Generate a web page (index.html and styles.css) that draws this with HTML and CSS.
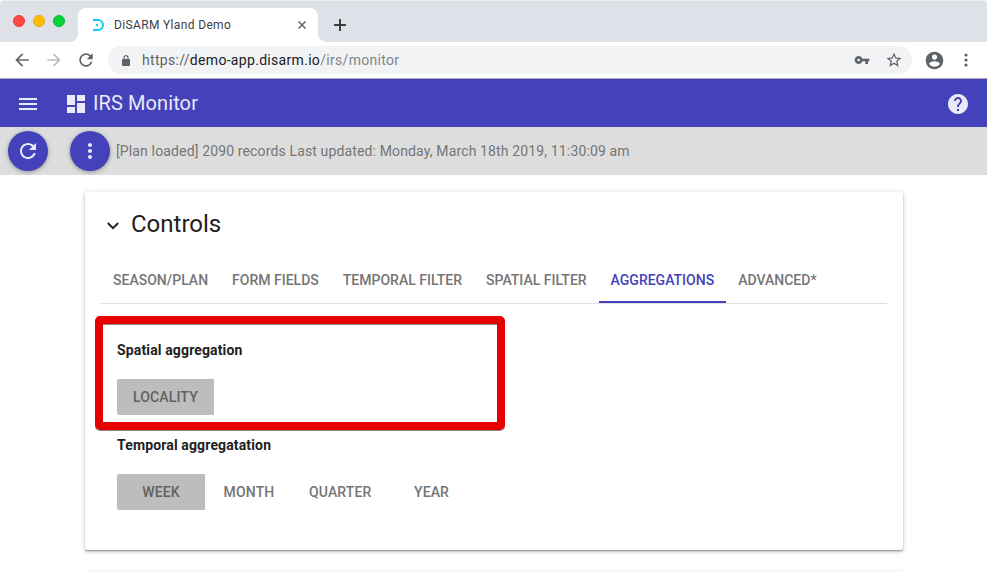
FILE: index.html
```html
<!DOCTYPE html>
<html lang="en">
<head>
<meta charset="utf-8">
<title>DiSARM Yland Demo</title>
<link rel="stylesheet" href="styles.css">
</head>
<body>
<div class="tabstrip">
  <div class="lights"><i class="red"></i><i class="yellow"></i><i class="green"></i></div>
  <div class="browser-tab">
    <svg class="favicon" width="12" height="12" viewBox="0 0 12 12"><path d="M1 1h5a5 5 0 0 1 0 10H1" fill="none" stroke="#0cd0fc" stroke-width="2"/><circle cx="5" cy="6" r="1.200" fill="#0ccbfa"/></svg>
    <span class="tab-title">DiSARM Yland Demo</span>
    <svg class="close" width="8" height="8" viewBox="0 0 8 8"><path d="M.5.5l7 7M7.500.5l-7 7" stroke="#5f6368" stroke-width="1.500"/></svg>
  </div>
  <svg class="plus" width="12" height="12" viewBox="0 0 12 12"><path d="M6 0v12M0 6h12" stroke="#3c4043" stroke-width="2"/></svg>
</div>
<div class="toolbar">
  <svg class="nav-icon" viewBox="0 0 24 24" fill="#5f6368"><path d="M20 11H7.830l5.590-5.590L12 4l-8 8 8 8 1.410-1.410L7.830 13H20v-2z"/></svg>
  <svg class="nav-icon" viewBox="0 0 24 24" fill="#babcbe"><path d="M12 4l-1.410 1.410L16.170 11H4v2h12.170l-5.580 5.590L12 20l8-8z"/></svg>
  <svg class="nav-icon" viewBox="0 0 24 24" fill="#5f6368"><path d="M17.650 6.350C16.200 4.900 14.210 4 12 4c-4.420 0-7.990 3.580-7.990 8s3.570 8 7.990 8c3.730 0 6.840-2.550 7.730-6h-2.080c-.82 2.330-3.040 4-5.650 4-3.310 0-6-2.690-6-6s2.690-6 6-6c1.660 0 3.140.69 4.220 1.780L13 11h7V4l-2.350 2.350z"/></svg>
  <div class="omnibox">
    <svg class="lock" width="8" height="11" viewBox="0 0 8 11"><rect y="4" width="8" height="7" rx="1" fill="#5f6368"/><path d="M2 4.500V2.700a2 2 0 0 1 4 0v1.800" fill="none" stroke="#5f6368" stroke-width="1.200"/></svg>
    <span class="url">https://<b>demo-app.disarm.io</b><em>/irs/monitor</em></span>
    <svg class="key" width="16" height="16" viewBox="0 0 24 24" fill="#5f6368"><path d="M12.650 10C11.830 7.670 9.610 6 7 6c-3.310 0-6 2.690-6 6s2.690 6 6 6c2.610 0 4.830-1.670 5.650-4H17v4h4v-4h2v-4H12.650zM7 14c-1.100 0-2-.9-2-2s.9-2 2-2 2 .9 2 2-.9 2-2 2z"/></svg>
    <svg class="star" width="18" height="18" viewBox="0 0 24 24" fill="#5f6368"><path d="M22 9.240l-7.190-.62L12 2 9.190 8.630 2 9.240l5.460 4.730L5.820 21 12 17.270 18.180 21l-1.630-7.030L22 9.240zM12 15.400l-3.760 2.270 1-4.280-3.320-2.880 4.380-.38L12 6.100l1.710 4.040 4.380.38-3.320 2.880 1 4.280L12 15.400z"/></svg>
  </div>
  <svg class="profile" width="21" height="21" viewBox="0 0 24 24" fill="#5f6368"><path d="M12 2C6.480 2 2 6.480 2 12s4.480 10 10 10 10-4.480 10-10S17.520 2 12 2zm0 3c1.660 0 3 1.340 3 3s-1.340 3-3 3-3-1.340-3-3 1.340-3 3-3zm0 14.200c-2.500 0-4.710-1.280-6-3.220.03-1.990 4-3.080 6-3.080 1.990 0 5.970 1.090 6 3.080-1.290 1.940-3.500 3.220-6 3.220z"/></svg>
  <svg class="kebab" width="4" height="14" viewBox="0 0 4 14" fill="#5f6368"><circle cx="2" cy="2" r="1.600"/><circle cx="2" cy="7" r="1.600"/><circle cx="2" cy="12" r="1.600"/></svg>
</div>
<header class="appbar">
  <svg class="menu" width="24" height="24" viewBox="0 0 24 24"><path d="M3 18h18v-2H3v2zm0-5h18v-2H3v2zm0-7v2h18V6H3z"/></svg>
  <svg class="dash" width="24" height="24" viewBox="0 0 24 24"><path d="M3 13h8V3H3v10zm0 8h8v-6H3v6zm10 0h8V11h-8v10zm0-18v6h8V3h-8z"/></svg>
  <h1>IRS Monitor</h1>
  <svg class="help" width="24" height="24" viewBox="0 0 24 24"><path d="M12 2C6.480 2 2 6.480 2 12s4.480 10 10 10 10-4.480 10-10S17.520 2 12 2zm1 17h-2v-2h2v2zm2.070-7.750l-.9.920C13.450 12.900 13 13.500 13 15h-2v-.5c0-1.100.45-2.100 1.170-2.830l1.240-1.260c.37-.36.59-.86.59-1.410 0-1.100-.9-2-2-2s-2 .9-2 2H8c0-2.210 1.790-4 4-4s4 1.790 4 4c0 .88-.36 1.680-.93 2.250z"/></svg>
</header>
<div class="statusbar">
  <button class="fab"><svg width="24" height="24" viewBox="0 0 24 24"><path d="M17.650 6.350C16.200 4.900 14.210 4 12 4c-4.420 0-7.990 3.580-7.990 8s3.570 8 7.990 8c3.730 0 6.840-2.550 7.730-6h-2.080c-.82 2.330-3.040 4-5.650 4-3.310 0-6-2.690-6-6s2.690-6 6-6c1.660 0 3.140.69 4.220 1.780L13 11h7V4l-2.350 2.350z"/></svg></button>
  <button class="fab"><svg width="24" height="24" viewBox="0 0 24 24"><path d="M12 8c1.100 0 2-.9 2-2s-.9-2-2-2-2 .9-2 2 .9 2 2 2zm0 2c-1.100 0-2 .9-2 2s.9 2 2 2 2-.9 2-2-.9-2-2-2zm0 6c-1.100 0-2 .9-2 2s.9 2 2 2 2-.9 2-2-.9-2-2-2z"/></svg></button>
  <span class="status">[Plan loaded] 2090 records Last updated: Monday, March 18th 2019, 11:30:09 am</span>
</div>
<main>
  <section class="card controls">
    <div class="heading">
      <svg width="12" height="8" viewBox="0 0 12 8"><path d="M.8 1L6 6.200 11.200 1" fill="none" stroke="#212121" stroke-width="2"/></svg>
      <h2>Controls</h2>
    </div>
    <nav class="tabs">
      <a>SEASON/PLAN</a><a>FORM FIELDS</a><a>TEMPORAL FILTER</a><a>SPATIAL FILTER</a><a class="active">AGGREGATIONS</a><a>ADVANCED*</a>
    </nav>
    <div class="group highlight">
      <h3>Spatial aggregation</h3>
      <div class="toggles"><button class="on">LOCALITY</button></div>
    </div>
    <div class="group">
      <h3>Temporal aggregatation</h3>
      <div class="toggles"><button class="on">WEEK</button><button>MONTH</button><button>QUARTER</button><button>YEAR</button></div>
    </div>
  </section>
  <section class="card next"></section>
</main>
</body>
</html>
```
FILE: styles.css
```css
* { box-sizing: border-box; }
html, body { height: 573px; overflow: hidden; }
body { margin: 0; background: #fff; font-family: Roboto, "Liberation Sans", sans-serif; font-size: 14px; color: #212121; display: flex; flex-direction: column; }
svg { display: block; flex: none; }
h1, h2, h3 { margin: 0; font-weight: 400; white-space: nowrap; }
button { border: 0; font: inherit; padding: 0; }

.tabstrip { flex: none; height: 42px; background: #dee1e8; border-top: 1px solid #eceef1; border-radius: 4px 4px 0 0; display: flex; align-items: flex-start; padding-left: 13px; }
.lights { display: flex; gap: 8px; padding-top: 14px; width: 65px; }
.lights i { width: 12px; height: 12px; border-radius: 50%; }
.red { background: #ff4a43; border: 1px solid #e83c36; }
.yellow { background: #ffbc05; border: 1px solid #e6a70a; }
.green { background: #06d135; border: 1px solid #08b92d; }
.browser-tab { position: relative; width: 240px; height: 34px; margin-top: 7px; background: #fff; border-radius: 8px 8px 0 0; display: flex; align-items: center; padding: 0 12px 0 14px; }
.browser-tab::before, .browser-tab::after { content: ""; position: absolute; bottom: 0; width: 8px; height: 8px; }
.browser-tab::before { left: -8px; background: radial-gradient(circle at 0 0, transparent 7.500px, #fff 8px); }
.browser-tab::after { right: -8px; background: radial-gradient(circle at 100% 0, transparent 7.500px, #fff 8px); }
.tab-title { margin-left: 10px; font-size: 12px; letter-spacing: .35px; color: #3c4043; white-space: nowrap; }
.close { margin-left: auto; }
.plus { margin: 18px 0 0 16px; }

.toolbar { flex: none; height: 37px; background: #fff; border-bottom: 1px solid #aaa9ad; display: flex; align-items: center; padding: 0 19px 0 12px; }
.nav-icon { width: 20px; height: 20px; margin-right: 12px; }
.omnibox { flex: none; width: 804px; height: 28px; border-radius: 14px; background: #f1f3f4; display: flex; align-items: center; padding: 0 9px 0 14px; }
.url { margin-left: 12px; font-size: 14px; letter-spacing: .31px; color: #5f6368; white-space: nowrap; }
.url b { font-weight: 400; color: #202124; }
.url em { font-style: normal; color: #80868b; }
.key { margin-left: auto; }
.star { margin-left: 15px; }
.profile { margin-left: 11.500px; }
.kebab { margin-left: auto; }

.appbar { flex: none; height: 48px; background: #4442bb; display: flex; align-items: center; padding: 2px 17px 0 16px; fill: #e9e9f7; color: #e9e9f7; }
.dash { margin-left: 24px; }
.appbar h1 { margin: 0 0 2px 5px; font-size: 20px; letter-spacing: .1px; line-height: 24px; }
.help { margin-left: auto; }
.statusbar { flex: none; height: 48px; background: #ddd; display: flex; align-items: center; padding-left: 8px; }
.fab { width: 40px; height: 40px; border-radius: 50%; background: #4442bb; fill: #e9e9f7; display: grid; place-items: center; margin-right: 22px; box-shadow: 0 1px 4px rgba(0,0,0,.35); }
.fab + .fab { margin-right: 6px; }
.status { color: #757575; white-space: nowrap; letter-spacing: .14px; }

main { flex: none; width: 818px; margin: 17px 0 0 85px; }
.card { background: #fff; border-radius: 2px; box-shadow: 0 1px 5px rgba(0,0,0,.2), 0 2px 2px rgba(0,0,0,.14), 0 1px 1px rgba(0,0,0,.2); }
.controls { height: 358px; padding: 0 16px; }
.next { margin-top: 22px; height: 1px; border-radius: 2px 2px 0 0; box-shadow: 0 0 4px rgba(0,0,0,.2); }
.heading { display: flex; align-items: center; height: 65px; padding-left: 6px; }
.heading svg { margin-top: 3px; }
.heading h2 { margin: 0 0 2px 12px; font-size: 24px; line-height: 32px; }
.tabs { height: 47px; border-bottom: 1px solid #e0e0e0; display: flex; }
.tabs a { height: 46px; padding: 0 12px; line-height: 46px; font-weight: 500; letter-spacing: .004px; color: #757575; white-space: nowrap; }
.tabs a.active { color: #4442bb; border-bottom: 2px solid #4442bb; }
.group { padding: 0 0 0 16px; margin-top: 4px; }
.highlight { width: 410px; height: 114px; margin: 12px 0 0 -6px; border: 8px solid #e60000; border-radius: 5px; padding: 15px 0 0 14px; box-shadow: inset 0 1px 0 #888, 0 1px 0 #888; }
.group h3 { font-size: 14px; line-height: 22px; font-weight: 700; letter-spacing: .14px; }
.toggles { display: flex; margin-top: 18px; }
.toggles button { min-width: 88px; height: 36px; padding: 0 16px; background: transparent; color: #757575; font-weight: 500; letter-spacing: .14px; }
.toggles .on { background: #bdbdbd; color: #616161; border-radius: 2px 0 0 2px; }
```
